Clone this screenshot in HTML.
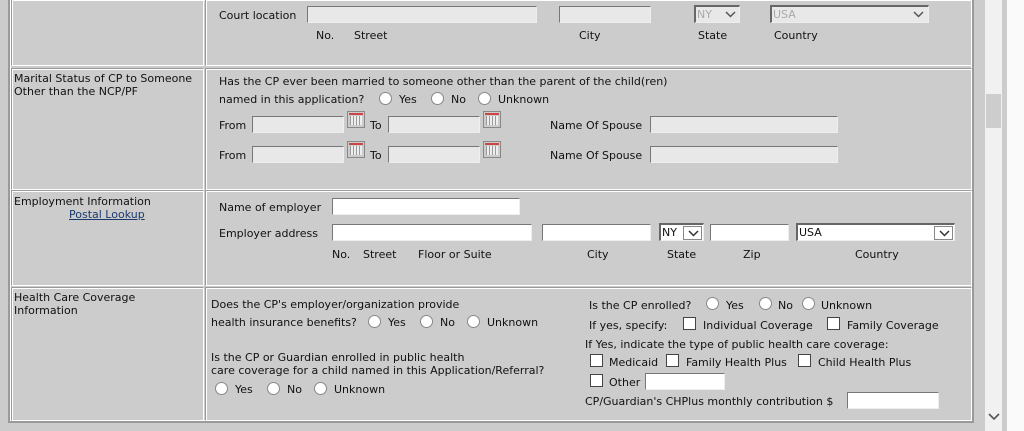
<!DOCTYPE html>
<html><head><meta charset="utf-8"><style>
*{margin:0;padding:0;box-sizing:border-box}
body{width:1024px;height:431px;background:#ccc;position:relative;overflow:hidden;font-family:"DejaVu Sans","Liberation Sans",sans-serif;font-size:11px;color:#111}
.a{position:absolute;white-space:nowrap;line-height:14px;margin-top:1px}
.b{position:absolute}
.cell{position:absolute;border-top:1px solid #9a9a9a;border-left:1px solid #9a9a9a;border-right:1px solid #fff;border-bottom:1px solid #fff;box-shadow:inset 1px 1px 0 #fff}
.in{position:absolute;height:17px;background:#fff;border-top:1px solid #777;border-left:1px solid #777;border-right:1px solid #eee;border-bottom:1px solid #eee}
.dis{background:#e8e8e8}
.r{position:absolute;width:13px;height:13px;border-radius:50%;background:#fff;border:1px solid #888}
.c{position:absolute;width:13px;height:13px;background:#fff;border:1px solid #444}
.cal{position:absolute;width:18px;height:17px;background:#ccc;border:1px solid #888;}
.cal:before{content:"";position:absolute;left:1px;right:1px;top:1px;height:2px;background:#c44}
.cal:after{content:"";position:absolute;left:2px;right:2px;top:4px;bottom:2px;background:repeating-linear-gradient(90deg,#999 0 1px,#eee 1px 3px)}
.sel{position:absolute;height:18px;background:#fff;border-top:2px solid #666;border-left:2px solid #666;border-right:1px solid #eee;border-bottom:1px solid #eee;padding-left:1px;line-height:15px}
.arr{position:absolute;right:1px;top:1px;width:19px;height:14px;border:1px solid #888;background:#fff}
.arr svg,.nv{position:absolute;left:4px;top:3px}
</style></head><body>
<div class="b" style="left:8px;top:0;width:966px;height:423px;border-left:2px solid #9a9a9a;border-right:2px solid #9a9a9a;border-bottom:2px solid #9a9a9a;box-shadow:inset 0 0 0 1px #fff"></div>
<div class="cell" style="left:11px;top:-2px;width:193px;height:68px"></div>
<div class="cell" style="left:205px;top:-2px;width:767px;height:68px"></div>
<div class="cell" style="left:11px;top:68px;width:193px;height:122px"></div>
<div class="cell" style="left:205px;top:68px;width:767px;height:122px"></div>
<div class="cell" style="left:11px;top:190px;width:193px;height:96px"></div>
<div class="cell" style="left:205px;top:190px;width:767px;height:96px"></div>
<div class="cell" style="left:11px;top:287px;width:193px;height:134px"></div>
<div class="cell" style="left:205px;top:287px;width:767px;height:134px"></div>
<div class="b" style="left:985px;top:0;width:17px;height:431px;background:#f1f1f1"></div>
<div class="b" style="left:1007px;top:0;width:17px;height:431px;background:#fafafa"></div>
<div class="b" style="left:986px;top:94px;width:15px;height:34px;background:#cdcdcd"></div>
<svg class="b" style="left:988px;top:412px" width="12" height="10"><path d="M1 2 L6 7 L11 2" stroke="#555" stroke-width="1.6" fill="none"/></svg>

<div class="a" style="left:219px;top:8px">Court location</div>
<div class="in dis" style="left:307px;top:6px;width:230px"></div>
<div class="in dis" style="left:559px;top:6px;width:92px"></div>
<div class="sel dis" style="left:694px;top:5px;width:46px;color:#aaa;background:#e8e8e8">NY<svg class="b" style="right:3px;top:4px" width="11" height="7"><path d="M1 1 L5.5 5.5 L10 1" stroke="#555" stroke-width="1.5" fill="none"/></svg></div>
<div class="sel dis" style="left:770px;top:5px;width:159px;color:#aaa;background:#e8e8e8">USA<svg class="b" style="right:4px;top:4px" width="11" height="7"><path d="M1 1 L5.5 5.5 L10 1" stroke="#555" stroke-width="1.5" fill="none"/></svg></div>
<div class="a" style="left:316px;top:28px">No.</div>
<div class="a" style="left:354px;top:28px">Street</div>
<div class="a" style="left:579px;top:28px">City</div>
<div class="a" style="left:698px;top:28px">State</div>
<div class="a" style="left:774px;top:28px">Country</div>

<div class="a" style="left:14px;top:71px">Marital Status of CP to Someone</div>
<div class="a" style="left:14px;top:84px">Other than the NCP/PF</div>
<div class="a" style="left:219px;top:74px">Has the CP ever been married to someone other than the parent of the child(ren)</div>
<div class="a" style="left:219px;top:92px">named in this application?</div>
<div class="r" style="left:379px;top:92px"></div><div class="a" style="left:399px;top:92px">Yes</div>
<div class="r" style="left:431px;top:92px"></div><div class="a" style="left:451px;top:92px">No</div>
<div class="r" style="left:478px;top:92px"></div><div class="a" style="left:498px;top:92px">Unknown</div>
<div class="a" style="left:219px;top:118px">From</div>
<div class="in dis" style="left:252px;top:116px;width:92px"></div>
<div class="cal" style="left:347px;top:111px"></div>
<div class="a" style="left:370px;top:118px">To</div>
<div class="in dis" style="left:388px;top:116px;width:92px"></div>
<div class="cal" style="left:483px;top:111px"></div>
<div class="a" style="left:550px;top:118px">Name Of Spouse</div>
<div class="in dis" style="left:650px;top:116px;width:188px"></div>
<div class="a" style="left:219px;top:148px">From</div>
<div class="in dis" style="left:252px;top:146px;width:92px"></div>
<div class="cal" style="left:347px;top:141px"></div>
<div class="a" style="left:370px;top:148px">To</div>
<div class="in dis" style="left:388px;top:146px;width:92px"></div>
<div class="cal" style="left:483px;top:141px"></div>
<div class="a" style="left:550px;top:148px">Name Of Spouse</div>
<div class="in dis" style="left:650px;top:146px;width:188px"></div>

<div class="a" style="left:14px;top:194px">Employment Information</div>
<div class="a" style="left:69px;top:207px;color:#1a3a6e;text-decoration:underline">Postal Lookup</div>
<div class="a" style="left:219px;top:200px">Name of employer</div>
<div class="in" style="left:332px;top:198px;width:188px"></div>
<div class="a" style="left:219px;top:226px">Employer address</div>
<div class="in" style="left:332px;top:224px;width:200px"></div>
<div class="in" style="left:542px;top:224px;width:109px"></div>
<div class="sel" style="left:659px;top:223px;width:45px">NY<div class="arr"><svg width="11" height="7"><path d="M1 1 L5.5 5.5 L10 1" stroke="#333" stroke-width="1.5" fill="none"/></svg></div></div>
<div class="in" style="left:710px;top:224px;width:79px"></div>
<div class="sel" style="left:796px;top:223px;width:159px">USA<div class="arr"><svg width="11" height="7"><path d="M1 1 L5.5 5.5 L10 1" stroke="#333" stroke-width="1.5" fill="none"/></svg></div></div>
<div class="a" style="left:332px;top:247px">No.</div>
<div class="a" style="left:363px;top:247px">Street</div>
<div class="a" style="left:418px;top:247px">Floor or Suite</div>
<div class="a" style="left:587px;top:247px">City</div>
<div class="a" style="left:667px;top:247px">State</div>
<div class="a" style="left:743px;top:247px">Zip</div>
<div class="a" style="left:855px;top:247px">Country</div>

<div class="a" style="left:14px;top:290px">Health Care Coverage</div>
<div class="a" style="left:14px;top:303px">Information</div>
<div class="a" style="left:211px;top:297px">Does the CP's employer/organization provide</div>
<div class="a" style="left:211px;top:315px">health insurance benefits?</div>
<div class="r" style="left:368px;top:315px"></div><div class="a" style="left:388px;top:315px">Yes</div>
<div class="r" style="left:420px;top:315px"></div><div class="a" style="left:440px;top:315px">No</div>
<div class="r" style="left:467px;top:315px"></div><div class="a" style="left:487px;top:315px">Unknown</div>
<div class="a" style="left:211px;top:350px">Is the CP or Guardian enrolled in public health</div>
<div class="a" style="left:211px;top:363px">care coverage for a child named in this Application/Referral?</div>
<div class="r" style="left:215px;top:382px"></div><div class="a" style="left:235px;top:382px">Yes</div>
<div class="r" style="left:267px;top:382px"></div><div class="a" style="left:287px;top:382px">No</div>
<div class="r" style="left:314px;top:382px"></div><div class="a" style="left:334px;top:382px">Unknown</div>

<div class="a" style="left:589px;top:298px">Is the CP enrolled?</div>
<div class="r" style="left:706px;top:297px"></div><div class="a" style="left:726px;top:298px">Yes</div>
<div class="r" style="left:759px;top:297px"></div><div class="a" style="left:778px;top:298px">No</div>
<div class="r" style="left:802px;top:297px"></div><div class="a" style="left:821px;top:298px">Unknown</div>
<div class="a" style="left:589px;top:318px">If yes, specify:</div>
<div class="c" style="left:683px;top:317px"></div><div class="a" style="left:703px;top:318px">Individual Coverage</div>
<div class="c" style="left:827px;top:317px"></div><div class="a" style="left:847px;top:318px">Family Coverage</div>
<div class="a" style="left:585px;top:337px">If Yes, indicate the type of public health care coverage:</div>
<div class="c" style="left:590px;top:354px"></div><div class="a" style="left:609px;top:355px">Medicaid</div>
<div class="c" style="left:666px;top:354px"></div><div class="a" style="left:686px;top:355px">Family Health Plus</div>
<div class="c" style="left:798px;top:354px"></div><div class="a" style="left:818px;top:355px">Child Health Plus</div>
<div class="c" style="left:590px;top:374px"></div><div class="a" style="left:609px;top:375px">Other</div>
<div class="in" style="left:645px;top:373px;width:80px"></div>
<div class="a" style="left:585px;top:394px">CP/Guardian's CHPlus monthly contribution $</div>
<div class="in" style="left:847px;top:392px;width:92px"></div>
</body></html>
